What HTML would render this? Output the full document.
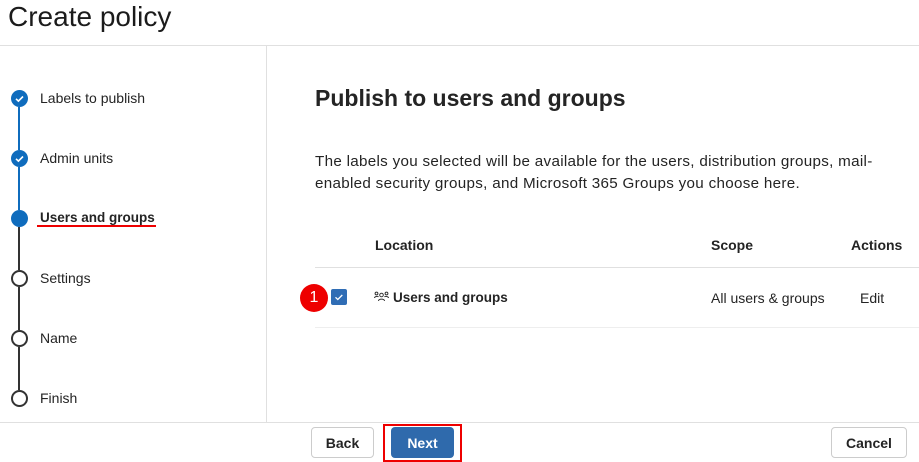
<!DOCTYPE html>
<html><head><style>
*{margin:0;padding:0;box-sizing:border-box}
body{width:919px;height:462px;overflow:hidden;background:#fff;font-family:"Liberation Sans",sans-serif;color:#242424;position:relative}
.abs{position:absolute}
.t{font-size:14px;white-space:nowrap}
.c{position:absolute;left:11px;width:17px;height:17px;border-radius:50%}
.done{background:#0f6cbd}
.todo{border:2px solid #333;background:#fff}
.ln{position:absolute;left:18px;width:2px}
.btn{position:absolute;height:31px;border-radius:4px;font-size:14px;font-weight:bold;display:flex;align-items:center;justify-content:center}
</style></head><body>
<div class="abs" style="left:8px;top:1px;font-size:28px;color:#1b1b1b">Create policy</div>
<div class="abs" style="left:0;top:45px;width:919px;height:1px;background:#e0e0e0"></div>
<div class="abs" style="left:266px;top:46px;width:1px;height:376px;background:#e0e0e0"></div>
<div class="abs" style="left:0;top:422px;width:919px;height:1px;background:#e0e0e0"></div>

<div class="ln" style="top:107px;height:43px;background:#0f6cbd"></div>
<div class="ln" style="top:167px;height:43px;background:#0f6cbd"></div>
<div class="ln" style="top:227px;height:43px;background:#333"></div>
<div class="ln" style="top:287px;height:43px;background:#333"></div>
<div class="ln" style="top:347px;height:43px;background:#333"></div>

<div class="c done" style="top:90px"><svg width="17" height="17"><path d="M5 8.8l2.4 2.3 4.6-4.6" stroke="#fff" stroke-width="1.6" fill="none"/></svg></div>
<div class="c done" style="top:150px"><svg width="17" height="17"><path d="M5 8.8l2.4 2.3 4.6-4.6" stroke="#fff" stroke-width="1.6" fill="none"/></svg></div>
<div class="c done" style="top:210px"></div>
<div class="c todo" style="top:270px"></div>
<div class="c todo" style="top:330px"></div>
<div class="c todo" style="top:390px"></div>

<div class="abs t" style="left:40px;top:90px">Labels to publish</div>
<div class="abs t" style="left:40px;top:150px">Admin units</div>
<div class="abs t" style="left:40px;top:210px;font-weight:bold;font-size:13.5px">Users and groups</div>
<div class="abs" style="left:37px;top:225px;width:119px;height:2px;background:#e00"></div>
<div class="abs t" style="left:40px;top:270px">Settings</div>
<div class="abs t" style="left:40px;top:330px">Name</div>
<div class="abs t" style="left:40px;top:390px">Finish</div>

<div class="abs" style="left:315px;top:85px;font-size:23px;font-weight:bold">Publish to users and groups</div>
<div class="abs" style="left:315px;top:151px;font-size:15.2px;letter-spacing:.3px;line-height:22px;white-space:nowrap">The labels you selected will be available for the users, distribution groups, mail-<br>enabled security groups, and Microsoft 365 Groups you choose here.</div>

<div class="abs t" style="left:375px;top:237px;font-weight:bold">Location</div>
<div class="abs t" style="left:711px;top:237px;font-weight:bold">Scope</div>
<div class="abs t" style="left:851px;top:237px;font-weight:bold">Actions</div>
<div class="abs" style="left:315px;top:267px;width:604px;height:1px;background:#e0e0e0"></div>
<div class="abs" style="left:315px;top:327px;width:604px;height:1px;background:#eee"></div>

<div class="abs" style="left:300px;top:284px;width:28px;height:28px;border-radius:50%;background:#e00;color:#fff;font-size:16px;display:flex;align-items:center;justify-content:center">1</div>
<div class="abs" style="left:331px;top:289px;width:16px;height:16px;border-radius:2px;background:#2f6db5"><svg width="16" height="16"><path d="M4.5 8.3l2.3 2.2 4.5-4.5" stroke="#fff" stroke-width="1.3" fill="none"/></svg></div>
<svg class="abs" style="left:374px;top:291px" width="15" height="12"><g stroke="#333" stroke-width="1" fill="none"><circle cx="7.5" cy="4" r="1.8"/><circle cx="2.5" cy="2.5" r="1.4"/><circle cx="12.5" cy="2.5" r="1.4"/><path d="M4.5 10c0-2.5 6-2.5 6 0M0.5 7c0-1.8 3.5-2 4-1M14.5 7c0-1.8-3.5-2-4-1"/></g></svg>
<div class="abs t" style="left:393px;top:290px;font-weight:bold;font-size:13.5px">Users and groups</div>
<div class="abs t" style="left:711px;top:290px">All users &amp; groups</div>
<div class="abs t" style="left:860px;top:290px">Edit</div>

<div class="btn" style="left:311px;top:427px;width:63px;border:1px solid #ccc;background:#fff">Back</div>
<div class="abs" style="left:383px;top:424px;width:79px;height:38px;border:2px solid #e00"></div>
<div class="btn" style="left:391px;top:427px;width:63px;background:#2f6aac;color:#fff">Next</div>
<div class="btn" style="left:831px;top:427px;width:76px;border:1px solid #ccc;background:#fff">Cancel</div>
</body></html>
